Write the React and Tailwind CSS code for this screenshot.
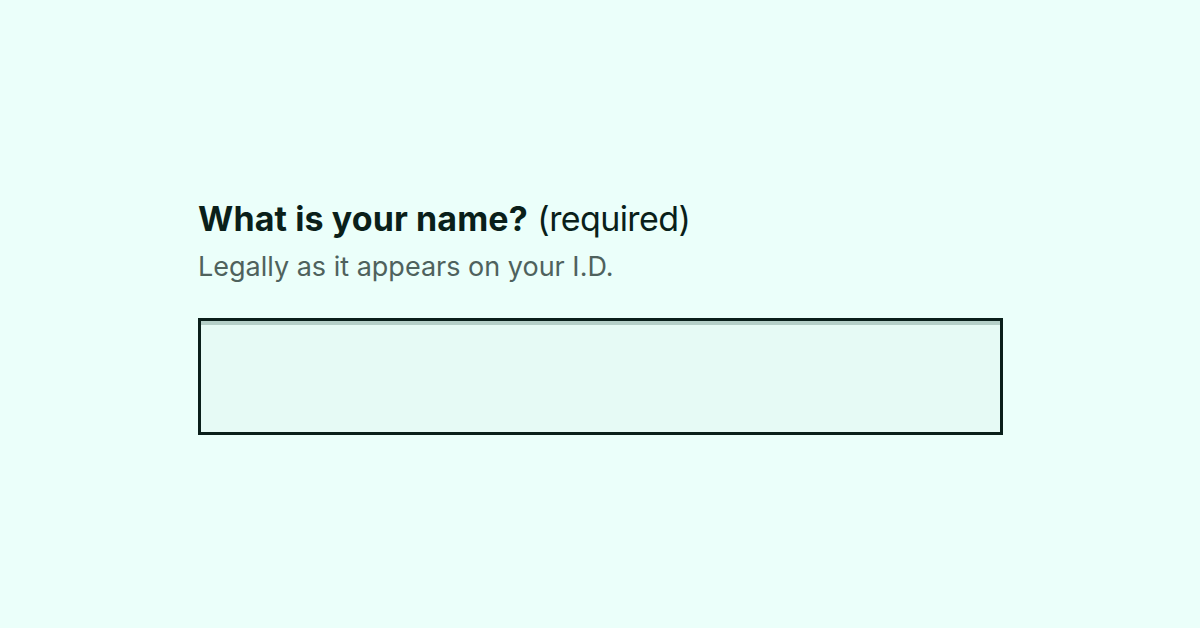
import React from 'react';

const App = () => {
  return (
    <div className="w-[1200px] h-[628px] bg-[#ebfffa] flex flex-col pl-[198px] pt-[199px]" style={{ fontFamily: 'Inter, "Noto Sans", sans-serif' }}>
      <label htmlFor="name" className="text-[34px] leading-[40px] text-[#0a1f1a]">
        <span className="font-bold tracking-[0.1px]">What is your name?</span>{' '}
        <span className="tracking-[-0.6px]">(required)</span>
      </label>
      <p className="text-[27px] leading-[32px] text-[#4f625d] mt-[12px]">Legally as it appears on your I.D.</p>
      <input
        id="name"
        type="text"
        className="mt-[35px] h-[117px] w-[805px] bg-[#e6faf5] border-[3.5px] border-[#0a1f1a] shadow-[inset_0_4px_0_#b5cfc8] outline-none"
      />
    </div>
  );
};

export default App;
